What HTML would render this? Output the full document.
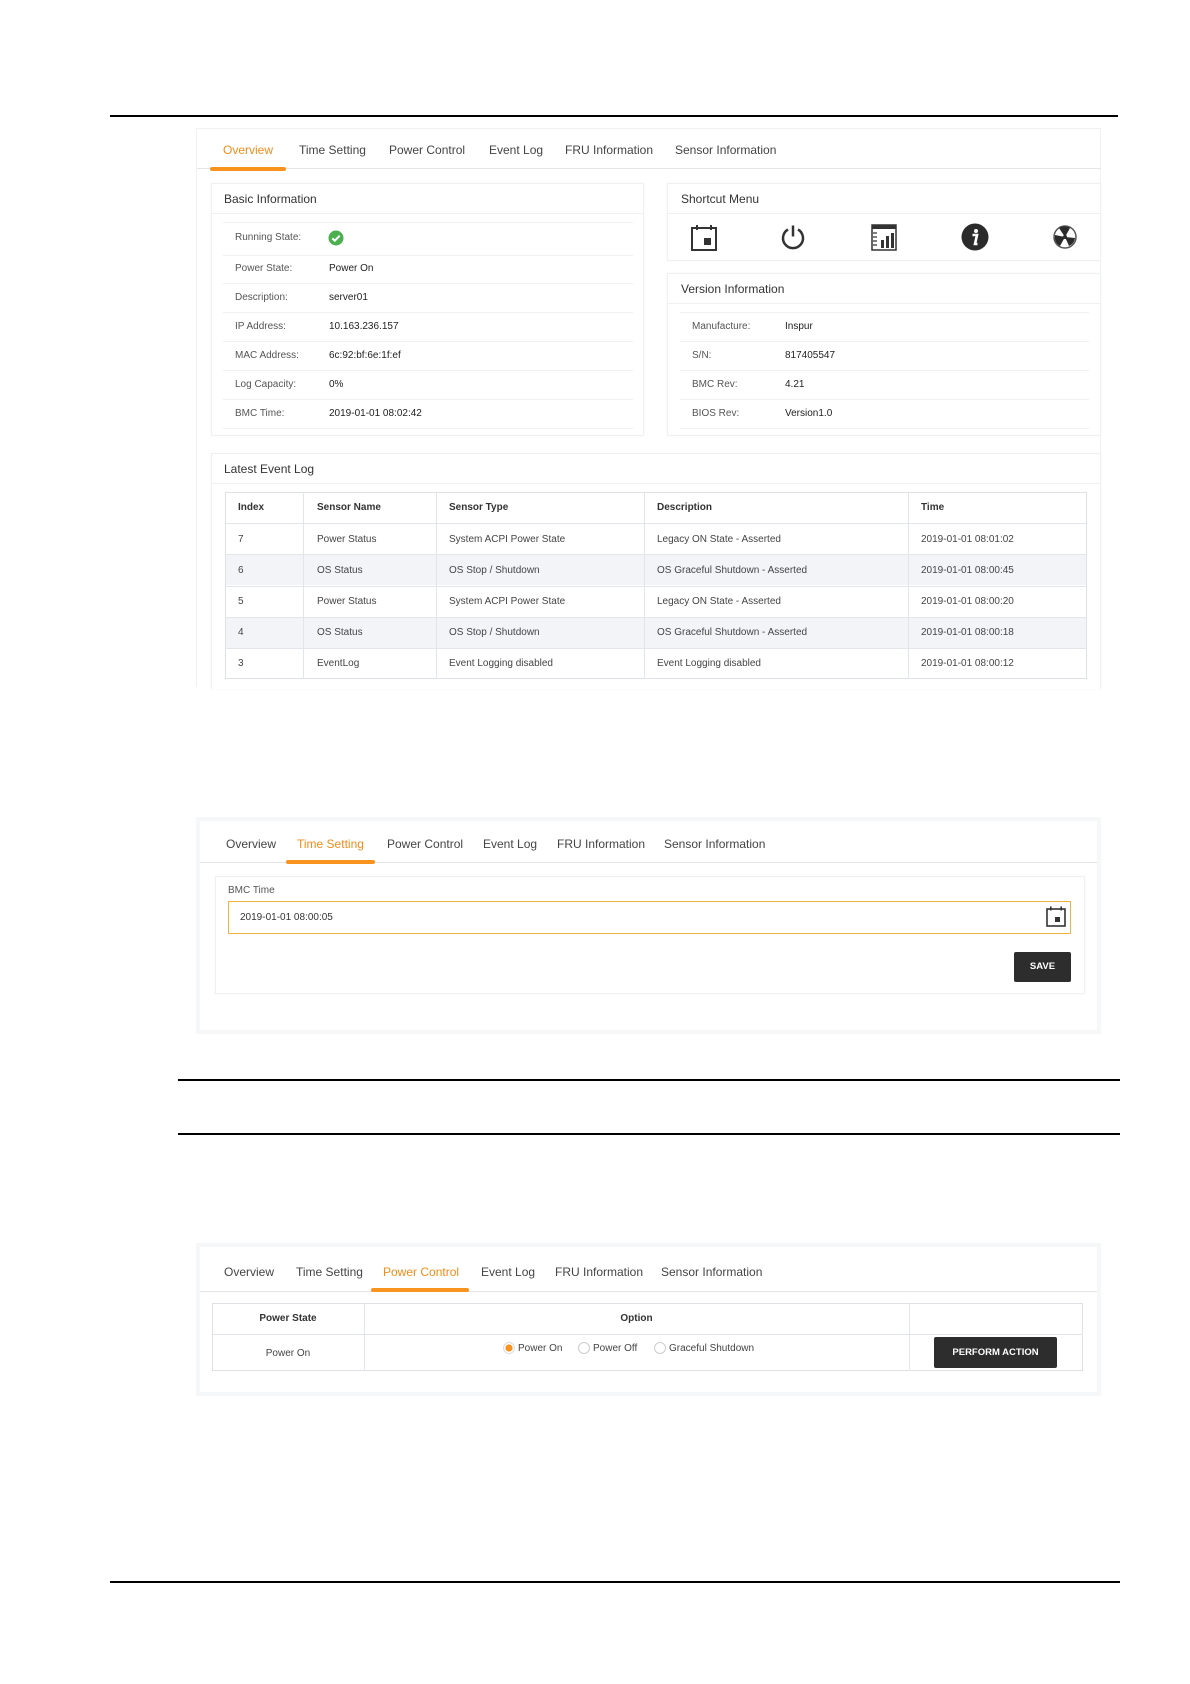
<!DOCTYPE html>
<html><head><meta charset="utf-8"><style>
*{box-sizing:border-box;margin:0;padding:0}
body{width:1190px;height:1684px;background:#fff;position:relative;font-family:"Liberation Sans",sans-serif;color:#333;overflow:hidden}
.a{position:absolute}
.rule{position:absolute;height:1.5px;background:#000}
.tab{position:absolute;font-size:12px;color:#444;white-space:nowrap}
.tab.on{color:#f08c1a}
.ul{position:absolute;height:4px;background:#f7931e;border-radius:2px}
.box{position:absolute;background:#fff;border:1px solid #eef0f3;box-shadow:0 0 2px rgba(0,0,0,.04)}
.hd{position:absolute;font-size:12px;color:#333}
.hl{position:absolute;height:1px;background:#eef0f2}
.lb{position:absolute;font-size:10px;color:#555;white-space:nowrap}
.vl{position:absolute;font-size:10px;color:#222;white-space:nowrap}
.t{position:absolute;font-size:10px;color:#444;white-space:nowrap}
.th{font-weight:bold;color:#333}
</style></head><body>
<div class="rule" style="left:110px;top:115px;width:1008px"></div>
<div class="rule" style="left:178px;top:1079px;width:942px"></div>
<div class="rule" style="left:178px;top:1133px;width:942px"></div>
<div class="rule" style="left:110px;top:1581px;width:1010px"></div>

<!-- Panel 1 -->
<div class="a" style="left:196px;top:128px;width:905px;height:559px;border:1px solid #f0f1f3;border-bottom:none"></div>
<div class="a" style="left:197px;top:168px;width:904px;height:1px;background:#e3e5e8"></div>
<div class="tab on" style="left:223px;top:143px">Overview</div>
<div class="tab" style="left:299px;top:143px">Time Setting</div>
<div class="tab" style="left:389px;top:143px">Power Control</div>
<div class="tab" style="left:489px;top:143px">Event Log</div>
<div class="tab" style="left:565px;top:143px">FRU Information</div>
<div class="tab" style="left:675px;top:143px">Sensor Information</div>
<div class="ul" style="left:210px;top:167px;width:76px"></div>

<div class="box" style="left:211px;top:183px;width:433px;height:253px"></div>
<div class="hd" style="left:224px;top:192px">Basic Information</div>
<div class="hl" style="left:212px;top:213px;width:431px"></div>
<div class="hl" style="left:223px;top:222px;width:410px"></div>
<div class="hl" style="left:223px;top:255px;width:410px"></div>
<div class="hl" style="left:223px;top:283px;width:410px"></div>
<div class="hl" style="left:223px;top:312px;width:410px"></div>
<div class="hl" style="left:223px;top:341px;width:410px"></div>
<div class="hl" style="left:223px;top:370px;width:410px"></div>
<div class="hl" style="left:223px;top:399px;width:410px"></div>
<div class="hl" style="left:223px;top:428px;width:410px"></div>
<div class="lb" style="left:235px;top:232px">Running State:</div>
<svg class="a" style="left:328px;top:230px" width="16" height="16" viewBox="0 0 16 16"><circle cx="8" cy="8" r="7.5" fill="#4caf50"/><path d="M4.3 8.3l2.5 2.4 4.9-5" stroke="#fff" stroke-width="2" fill="none"/></svg>
<div class="lb" style="left:235px;top:263px">Power State:</div><div class="vl" style="left:329px;top:263px">Power On</div>
<div class="lb" style="left:235px;top:292px">Description:</div><div class="vl" style="left:329px;top:292px">server01</div>
<div class="lb" style="left:235px;top:321px">IP Address:</div><div class="vl" style="left:329px;top:321px">10.163.236.157</div>
<div class="lb" style="left:235px;top:350px">MAC Address:</div><div class="vl" style="left:329px;top:350px">6c:92:bf:6e:1f:ef</div>
<div class="lb" style="left:235px;top:379px">Log Capacity:</div><div class="vl" style="left:329px;top:379px">0%</div>
<div class="lb" style="left:235px;top:408px">BMC Time:</div><div class="vl" style="left:329px;top:408px">2019-01-01 08:02:42</div>

<div class="box" style="left:667px;top:183px;width:434px;height:78px"></div>
<div class="hd" style="left:681px;top:192px">Shortcut Menu</div>
<div class="hl" style="left:668px;top:213px;width:432px"></div>
<svg class="a" style="left:691px;top:224px" width="26" height="27" viewBox="0 0 26 27"><rect x="1" y="4" width="24" height="22" fill="none" stroke="#333" stroke-width="2"/><rect x="5" y="1" width="2" height="5" fill="#333"/><rect x="19" y="1" width="2" height="5" fill="#333"/><rect x="13" y="14" width="7" height="7" fill="#333"/></svg>
<svg class="a" style="left:780px;top:224px" width="26" height="26" viewBox="0 0 26 26"><path d="M8 5.5A10 10 0 1 0 18 5.5" fill="none" stroke="#333" stroke-width="2.5"/><path d="M13 1.5v11" stroke="#333" stroke-width="2.5"/></svg>
<svg class="a" style="left:871px;top:224px" width="26" height="27" viewBox="0 0 26 27"><rect x="1" y="1" width="24" height="25" fill="none" stroke="#333" stroke-width="1.5"/><rect x="1" y="1" width="24" height="4" fill="#333"/><path d="M2 9h4M2 13h4M2 17h4M2 21h4" stroke="#333" stroke-width="1.2"/><rect x="10" y="16" width="3" height="8" fill="#333"/><rect x="15" y="12" width="3" height="12" fill="#333"/><rect x="20" y="9" width="3" height="15" fill="#333"/></svg>
<svg class="a" style="left:961px;top:223px" width="28" height="28" viewBox="0 0 28 28"><circle cx="14" cy="14" r="13.5" fill="#2b2b2b"/><circle cx="15" cy="8" r="2" fill="#fff"/><path d="M11.5 12h4.5l-2 9h2.5" stroke="#fff" stroke-width="2.6" fill="none"/></svg>
<svg class="a" style="left:1053px;top:225px" width="24" height="24" viewBox="0 0 24 24"><circle cx="12" cy="12" r="11" fill="#fff" stroke="#555" stroke-width="1.5"/><path d="M12 12L6 3A10 10 0 0 1 17 3Z M12 12L22 13A10 10 0 0 1 16 21Z M12 12L7 21A10 10 0 0 1 2 10Z" fill="#2b2b2b"/><circle cx="12" cy="12" r="2" fill="#2b2b2b"/></svg>

<div class="box" style="left:667px;top:273px;width:434px;height:163px"></div>
<div class="hd" style="left:681px;top:282px">Version Information</div>
<div class="hl" style="left:668px;top:303px;width:432px"></div>
<div class="hl" style="left:680px;top:312px;width:409px"></div>
<div class="hl" style="left:680px;top:341px;width:409px"></div>
<div class="hl" style="left:680px;top:370px;width:409px"></div>
<div class="hl" style="left:680px;top:399px;width:409px"></div>
<div class="hl" style="left:680px;top:428px;width:409px"></div>
<div class="lb" style="left:692px;top:321px">Manufacture:</div><div class="vl" style="left:785px;top:321px">Inspur</div>
<div class="lb" style="left:692px;top:350px">S/N:</div><div class="vl" style="left:785px;top:350px">817405547</div>
<div class="lb" style="left:692px;top:379px">BMC Rev:</div><div class="vl" style="left:785px;top:379px">4.21</div>
<div class="lb" style="left:692px;top:408px">BIOS Rev:</div><div class="vl" style="left:785px;top:408px">Version1.0</div>

<div class="box" style="left:211px;top:453px;width:890px;height:236px;border-bottom:none"></div>
<div class="hd" style="left:224px;top:462px">Latest Event Log</div>
<div class="hl" style="left:212px;top:483px;width:888px"></div>
<div class="a" style="left:225px;top:492px;width:862px;height:187px;border:1px solid #dde0e4"></div>
<div class="a" style="left:226px;top:554px;width:860px;height:31px;background:#f2f4f8"></div>
<div class="a" style="left:226px;top:617px;width:860px;height:31px;background:#f2f4f8"></div>
<div class="hl" style="left:225px;top:523px;width:862px;background:#e2e5e9"></div>
<div class="hl" style="left:225px;top:554px;width:862px;background:#e2e5e9"></div>
<div class="hl" style="left:225px;top:586px;width:862px;background:#e2e5e9"></div>
<div class="hl" style="left:225px;top:617px;width:862px;background:#e2e5e9"></div>
<div class="hl" style="left:225px;top:648px;width:862px;background:#e2e5e9"></div>
<div class="a" style="left:303px;top:492px;width:1px;height:187px;background:#e2e5e9"></div>
<div class="a" style="left:436px;top:492px;width:1px;height:187px;background:#e2e5e9"></div>
<div class="a" style="left:644px;top:492px;width:1px;height:187px;background:#e2e5e9"></div>
<div class="a" style="left:908px;top:492px;width:1px;height:187px;background:#e2e5e9"></div>
<div class="t th" style="left:238px;top:502px">Index</div><div class="t th" style="left:317px;top:502px">Sensor Name</div><div class="t th" style="left:449px;top:502px">Sensor Type</div><div class="t th" style="left:657px;top:502px">Description</div><div class="t th" style="left:921px;top:502px">Time</div>
<div class="t" style="left:238px;top:534px">7</div><div class="t" style="left:317px;top:534px">Power Status</div><div class="t" style="left:449px;top:534px">System ACPI Power State</div><div class="t" style="left:657px;top:534px">Legacy ON State - Asserted</div><div class="t" style="left:921px;top:534px">2019-01-01 08:01:02</div>
<div class="t" style="left:238px;top:565px">6</div><div class="t" style="left:317px;top:565px">OS Status</div><div class="t" style="left:449px;top:565px">OS Stop / Shutdown</div><div class="t" style="left:657px;top:565px">OS Graceful Shutdown - Asserted</div><div class="t" style="left:921px;top:565px">2019-01-01 08:00:45</div>
<div class="t" style="left:238px;top:596px">5</div><div class="t" style="left:317px;top:596px">Power Status</div><div class="t" style="left:449px;top:596px">System ACPI Power State</div><div class="t" style="left:657px;top:596px">Legacy ON State - Asserted</div><div class="t" style="left:921px;top:596px">2019-01-01 08:00:20</div>
<div class="t" style="left:238px;top:627px">4</div><div class="t" style="left:317px;top:627px">OS Status</div><div class="t" style="left:449px;top:627px">OS Stop / Shutdown</div><div class="t" style="left:657px;top:627px">OS Graceful Shutdown - Asserted</div><div class="t" style="left:921px;top:627px">2019-01-01 08:00:18</div>
<div class="t" style="left:238px;top:658px">3</div><div class="t" style="left:317px;top:658px">EventLog</div><div class="t" style="left:449px;top:658px">Event Logging disabled</div><div class="t" style="left:657px;top:658px">Event Logging disabled</div><div class="t" style="left:921px;top:658px">2019-01-01 08:00:12</div>

<!-- Panel 2 -->
<div class="a" style="left:196px;top:817px;width:905px;height:217px;border:4px solid #f5f7f9;background:#fff"></div>
<div class="a" style="left:200px;top:862px;width:897px;height:1px;background:#e3e5e8"></div>
<div class="tab" style="left:226px;top:837px">Overview</div>
<div class="tab on" style="left:297px;top:837px">Time Setting</div>
<div class="tab" style="left:387px;top:837px">Power Control</div>
<div class="tab" style="left:483px;top:837px">Event Log</div>
<div class="tab" style="left:557px;top:837px">FRU Information</div>
<div class="tab" style="left:664px;top:837px">Sensor Information</div>
<div class="ul" style="left:286px;top:860px;width:89px"></div>
<div class="box" style="left:215px;top:876px;width:870px;height:118px"></div>
<div class="lb" style="left:228px;top:885px">BMC Time</div>
<div class="a" style="left:228px;top:901px;width:843px;height:33px;border:1.5px solid #f2b33d"></div>
<div class="vl" style="left:240px;top:912px;color:#333">2019-01-01 08:00:05</div>
<svg class="a" style="left:1046px;top:906px" width="20" height="21" viewBox="0 0 20 21"><rect x="1" y="3" width="18" height="17" fill="none" stroke="#333" stroke-width="1.6"/><rect x="4" y="0.5" width="1.6" height="4" fill="#333"/><rect x="14.4" y="0.5" width="1.6" height="4" fill="#333"/><rect x="9" y="11" width="5" height="5" fill="#333"/></svg>
<div class="a" style="left:1014px;top:952px;width:57px;height:30px;background:#2d2d2d;border-radius:2px;color:#fff;font-size:9.5px;font-weight:bold;text-align:center;line-height:30px">SAVE</div>

<!-- Panel 3 -->
<div class="a" style="left:196px;top:1243px;width:905px;height:153px;border:4px solid #f5f7f9;background:#fff"></div>
<div class="a" style="left:200px;top:1291px;width:897px;height:1px;background:#e3e5e8"></div>
<div class="tab" style="left:224px;top:1265px">Overview</div>
<div class="tab" style="left:296px;top:1265px">Time Setting</div>
<div class="tab on" style="left:383px;top:1265px">Power Control</div>
<div class="tab" style="left:481px;top:1265px">Event Log</div>
<div class="tab" style="left:555px;top:1265px">FRU Information</div>
<div class="tab" style="left:661px;top:1265px">Sensor Information</div>
<div class="ul" style="left:371px;top:1288px;width:98px"></div>
<div class="a" style="left:212px;top:1303px;width:871px;height:68px;border:1px solid #dde0e4"></div>
<div class="hl" style="left:212px;top:1334px;width:871px;background:#e2e5e9"></div>
<div class="a" style="left:364px;top:1303px;width:1px;height:68px;background:#e2e5e9"></div>
<div class="a" style="left:909px;top:1303px;width:1px;height:68px;background:#e2e5e9"></div>
<div class="t th" style="left:212px;top:1313px;width:152px;text-align:center">Power State</div>
<div class="t th" style="left:364px;top:1313px;width:545px;text-align:center">Option</div>
<div class="t" style="left:212px;top:1348px;width:152px;text-align:center">Power On</div>
<svg class="a" style="left:503px;top:1342px" width="12" height="12"><circle cx="6" cy="6" r="5.5" fill="#fff" stroke="#ddd"/><circle cx="6" cy="6" r="3.6" fill="#f7931e"/></svg>
<div class="t" style="left:518px;top:1343px">Power On</div>
<svg class="a" style="left:578px;top:1342px" width="12" height="12"><circle cx="6" cy="6" r="5.5" fill="#fff" stroke="#ccc"/></svg>
<div class="t" style="left:593px;top:1343px">Power Off</div>
<svg class="a" style="left:654px;top:1342px" width="12" height="12"><circle cx="6" cy="6" r="5.5" fill="#fff" stroke="#ccc"/></svg>
<div class="t" style="left:669px;top:1343px">Graceful Shutdown</div>
<div class="a" style="left:934px;top:1337px;width:123px;height:31px;background:#2d2d2d;border-radius:2px;color:#fff;font-size:9.5px;font-weight:bold;text-align:center;line-height:31px">PERFORM ACTION</div>
</body></html>
